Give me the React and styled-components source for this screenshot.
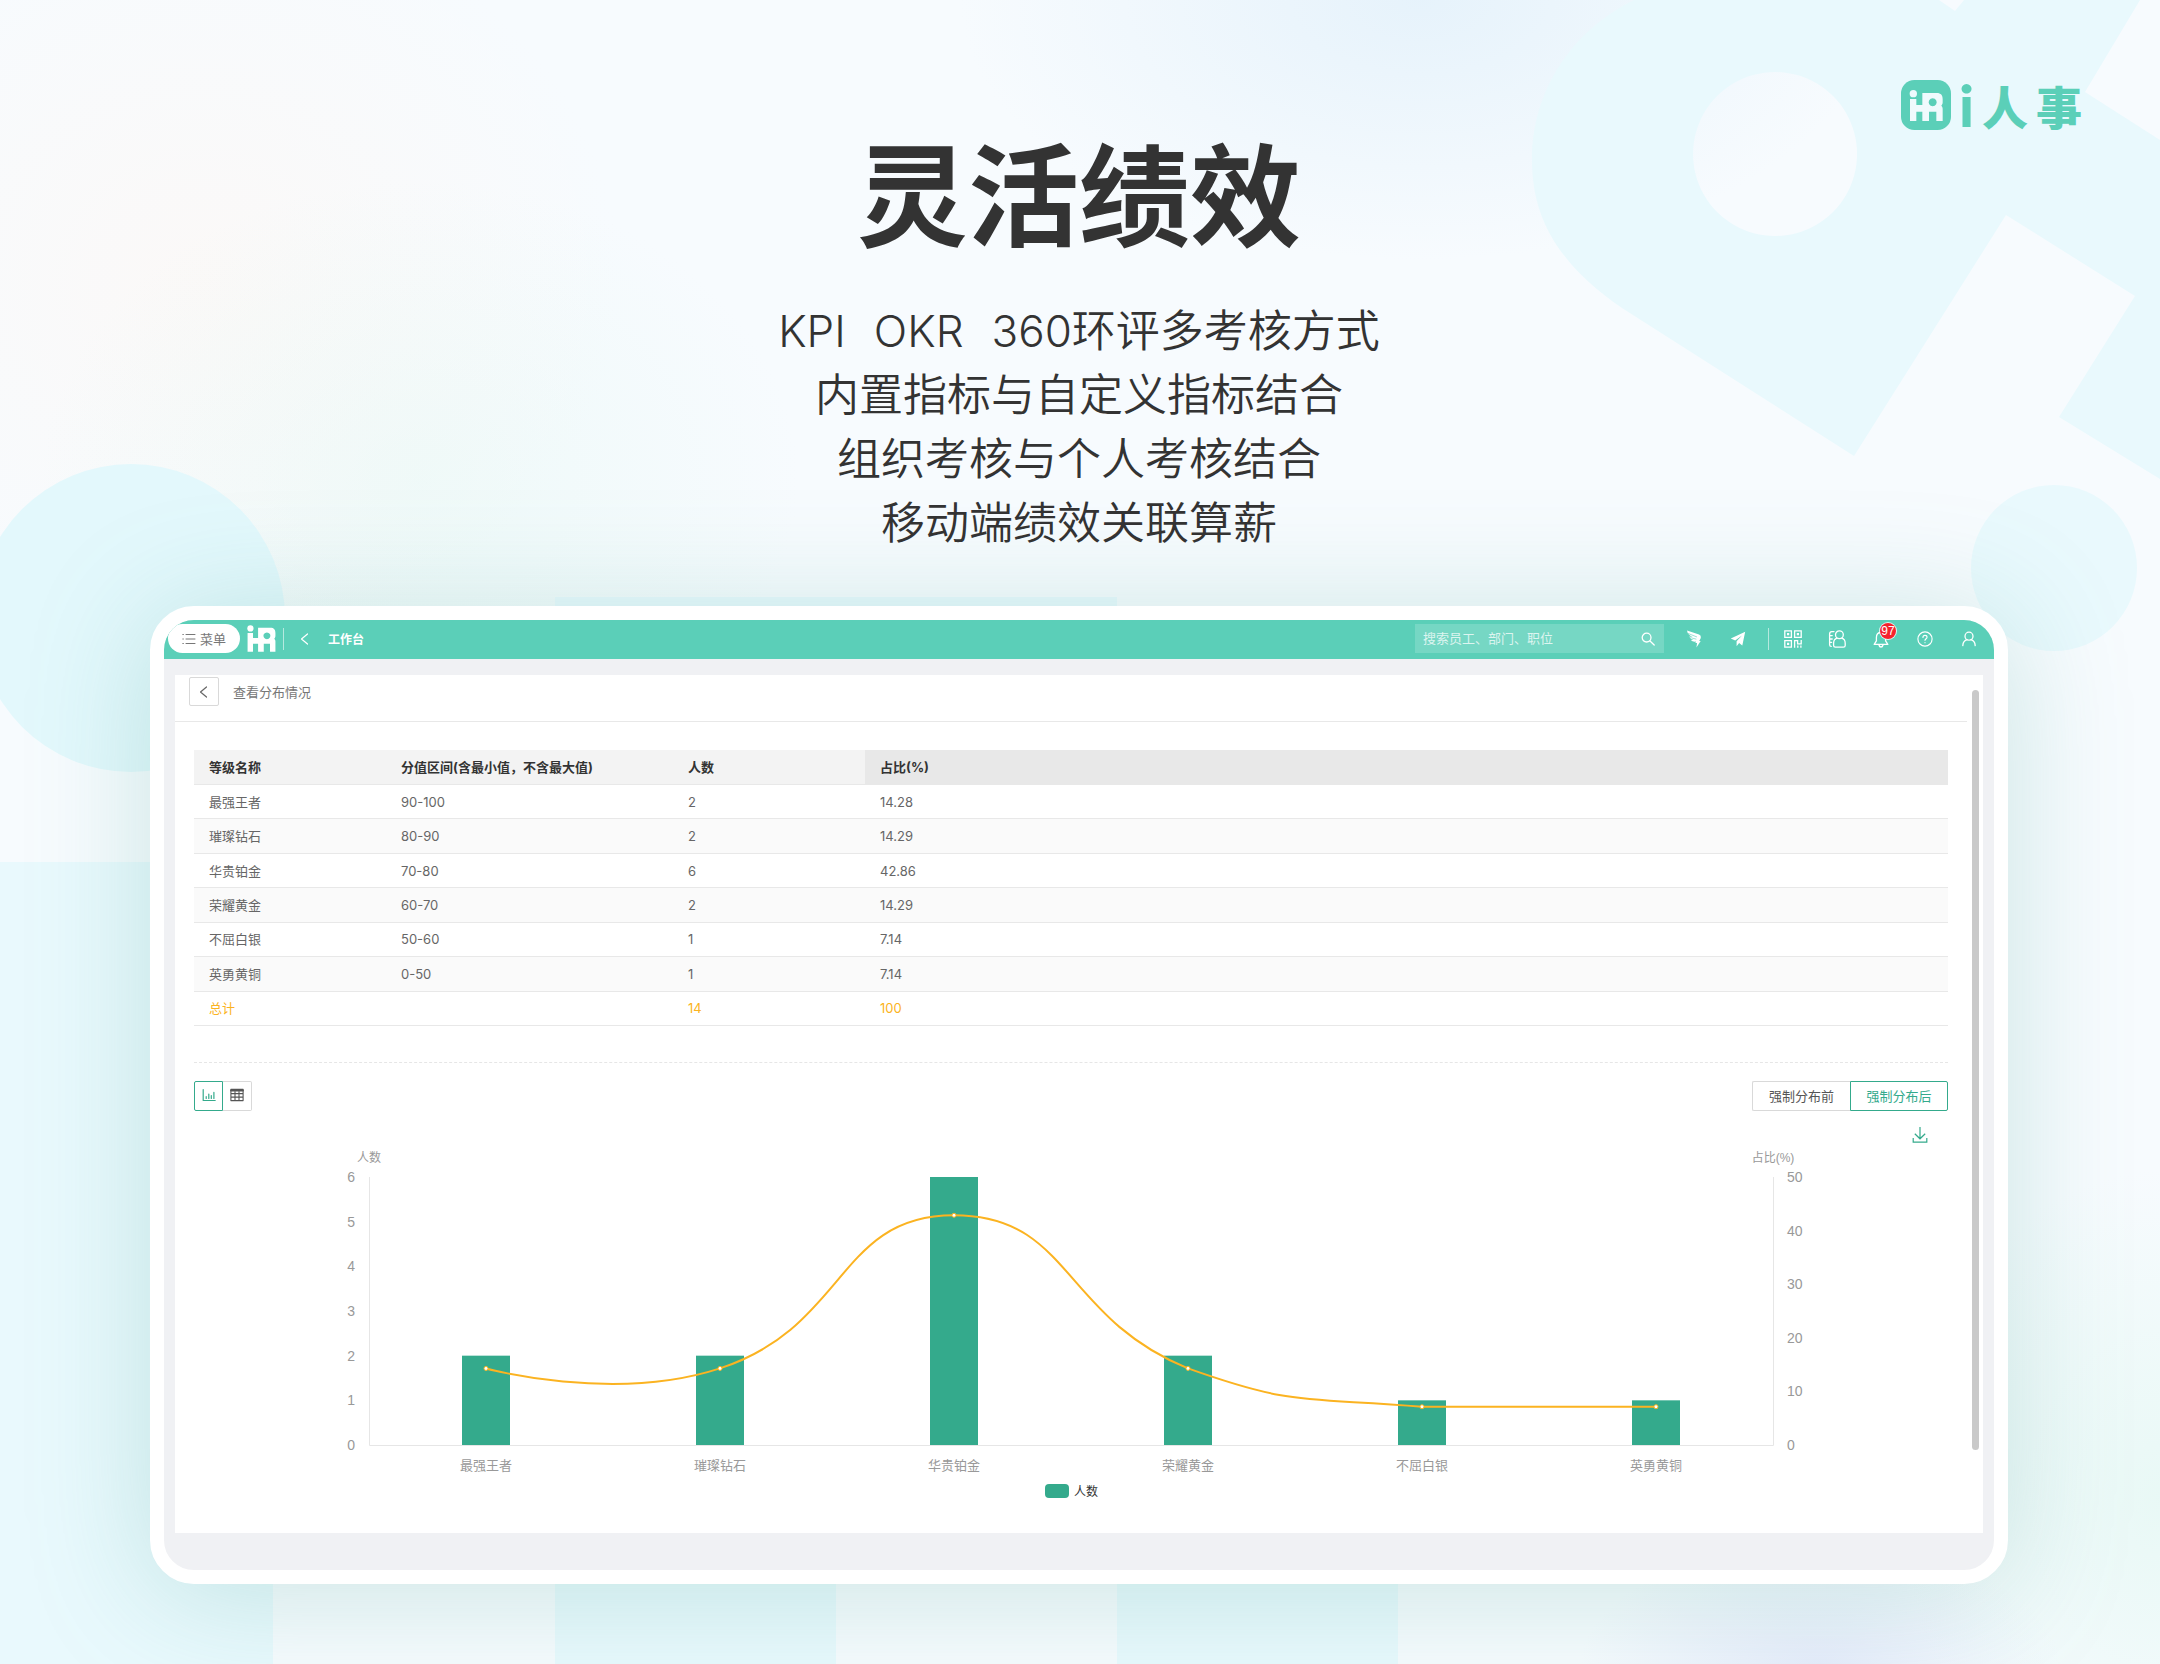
import React, { useState } from "react";
import styled, { createGlobalStyle, css } from "styled-components";

const brand = "#5bcfb8";
const green = "#34aa8c";
const amber = "#fbb321";

const GlobalStyle = createGlobalStyle`
  *, *::before, *::after { box-sizing: border-box; }
  body {
    margin: 0;
    background: #f8fbfe;
    color: #333;
    font-family: "Liberation Sans", "Noto Sans CJK SC", sans-serif;
    font-size: 13px;
  }
  button, input { font: inherit; }
`;

/* ---------- page ---------- */

const Page = styled.div`
  position: relative;
  isolation: isolate;
  min-height: 100vh;
  padding: 80px 152px 80px 150px;
  overflow: hidden;
`;

const Backdrop = styled.svg`
  position: absolute;
  inset: 0;
  z-index: -1;
  width: 100%;
  height: 100%;
`;

const Brand = styled.div`
  display: flex;
  justify-content: flex-end;
  align-items: center;
  gap: 8px;
  height: 50px;
  margin-right: -74px;
  color: ${brand};
  font-family: "Noto Sans CJK SC", sans-serif;
  font-size: 46px;
  font-weight: 900;
  line-height: 50px;
`;

const BrandInitial = styled.span`
  font-family: Lato, sans-serif;
  font-size: 58px;
`;

const Hero = styled.section`
  text-align: center;
  margin: 5px 0 51px;
`;

const HeroTitle = styled.h1`
  margin: 0 0 54px;
  font-family: "Noto Sans CJK SC", sans-serif;
  font-size: 111px;
  font-weight: 700;
  line-height: 110px;
`;

const HeroLine = styled.p`
  display: flex;
  justify-content: center;
  gap: 28px;
  margin: 0;
  font-family: Inter, "Noto Sans CJK SC", sans-serif;
  font-size: 44px;
  font-weight: 350;
  line-height: 64px;
`;

const Frame = styled.main`
  border: 14px solid #fff;
  border-radius: 44px;
  background: #f0f1f4;
  box-shadow: 0 10px 120px rgba(80, 170, 155, 0.27);
  overflow: hidden;
`;

/* ---------- top bar ---------- */

const TopBar = styled.header`
  display: flex;
  align-items: center;
  height: 39px;
  padding: 0 3px 2px 4px;
  background: ${brand};
  color: #fff;
`;

const MenuButton = styled.button`
  display: flex;
  align-items: center;
  gap: 4px;
  height: 29px;
  padding: 0 14px;
  border: 0;
  border-radius: 15px;
  background: #fff;
  color: #777;
`;

const Mark = styled.svg`
  width: 29px;
  height: 27px;
  margin: 0 7px;
`;

const Separator = styled.span`
  width: 1px;
  height: 22px;
  background: rgba(255, 255, 255, 0.55);
  margin-left: ${(p) => p.$before || 0}px;
  margin-right: ${(p) => p.$after || 0}px;
`;

const Crumb = styled.a`
  display: flex;
  align-items: center;
  gap: 17px;
  color: #fff;
  font-size: 12px;
  font-weight: 700;
  text-decoration: none;
`;

const Search = styled.label`
  display: flex;
  align-items: center;
  width: 249px;
  height: 29px;
  margin: 0 8px 0 auto;
  padding: 0 9px 0 8px;
  background: rgba(255, 255, 255, 0.17);
`;

const SearchInput = styled.input`
  flex: 1;
  min-width: 0;
  padding: 0;
  border: 0;
  outline: 0;
  background: transparent;
  color: #fff;
  &::placeholder { color: rgba(255, 255, 255, 0.75); opacity: 1; }
`;

const BarButton = styled.button`
  position: relative;
  display: flex;
  align-items: center;
  justify-content: center;
  width: 44px;
  height: 37px;
  padding: 0;
  border: 0;
  background: none;
  color: #fff;
`;

const Badge = styled.span`
  position: absolute;
  top: 3px;
  left: 21px;
  min-width: 16px;
  height: 16px;
  border-radius: 8px;
  box-shadow: 0 0 0 1px rgba(255, 255, 255, 0.8);
  background: #f5222d;
  font-size: 12px;
  line-height: 16px;
  text-align: center;
`;

/* ---------- panel ---------- */

const Workspace = styled.div`
  padding: 16px 11px 37px;
`;

const Panel = styled.section`
  position: relative;
  background: #fff;
`;

const PanelHead = styled.div`
  display: flex;
  align-items: flex-start;
  gap: 14px;
  height: 47px;
  margin-right: 16px;
  padding: 2px 0 0 14px;
  border-bottom: 1px solid #e8e8e8;
`;

const BackButton = styled.button`
  display: flex;
  align-items: center;
  justify-content: center;
  width: 30px;
  height: 29px;
  padding: 0;
  border: 1px solid #d9d9d9;
  border-radius: 2px;
  background: #fff;
  color: #666;
`;

const PanelTitle = styled.h2`
  margin: 0;
  color: #777;
  font-size: 13px;
  font-weight: 400;
  line-height: 32px;
`;

const PanelBody = styled.div`
  padding: 28px 35px 0 19px;
`;

const ScrollThumb = styled.div`
  position: absolute;
  top: 15px;
  right: 4px;
  bottom: 83px;
  width: 7px;
  border-radius: 4px;
  background: #c9c9c9;
`;

const Grid = styled.table`
  width: 100%;
  height: 276px;
  border-collapse: separate;
  border-spacing: 0;
  table-layout: fixed;
  font-family: Inter, "Noto Sans CJK SC", sans-serif;
  text-align: left;
`;

const Column = styled.col`
  width: ${(p) => (p.$width ? `${p.$width}px` : "auto")};
`;

const cell = css`
  padding: 0 15px;
  border-bottom: 1px solid #e8e8e8;
  line-height: 20px;
`;

const HeadCell = styled.th`
  ${cell}
  height: 35px;
  background: ${(p) => (p.$last ? "#e8e8e8" : "#f3f3f3")};
  color: #333;
  font-weight: 700;
`;

const Cell = styled.td`
  ${cell}
  color: inherit;
`;

const Row = styled.tr`
  color: ${(p) => (p.$total ? amber : "#666")};
  background: ${(p) => (p.$striped ? "#fafafa" : "#fff")};
`;

const Divider = styled.hr`
  margin: 36px 0 18px;
  border: 0;
  border-top: 1px dashed #e6e6e6;
`;

const Toolbar = styled.div`
  display: flex;
  justify-content: space-between;
`;

const Group = styled.div`
  display: flex;
`;

const Toggle = styled.button`
  display: flex;
  align-items: center;
  justify-content: center;
  width: ${(p) => (p.$wide ? 98 : 29)}px;
  height: 30px;
  padding: 0 0 2px;
  border: 1px solid #d9d9d9;
  background: #fff;
  color: #555;
  &:first-child { border-radius: 2px 0 0 2px; border-right-width: 0; }
  &:last-child { border-radius: 0 2px 2px 0; border-left-width: 0; }
  &[aria-pressed="true"] { border: 1px solid ${green}; color: ${green}; }
`;

const Download = styled.button`
  display: block;
  height: 16px;
  margin: 16px 20px 0 auto;
  padding: 0;
  border: 0;
  background: none;
  color: ${green};
`;

const Chart = styled.svg`
  display: block;
  width: 100%;
  height: 390px;
`;

const AxisText = styled.text`
  fill: ${(p) => (p.$dark ? "#333" : "#999")};
  font-size: ${(p) => p.$size}px;
  text-anchor: ${(p) => p.$anchor || "middle"};
`;

/* ---------- icons ---------- */

const Stroke = ({ size = 18, box = 18, width = 1.3, children }) => (
  <svg width={size} height={size} viewBox={`0 0 ${box} ${box}`} fill="none"
    stroke="currentColor" strokeWidth={width} strokeLinecap="round" strokeLinejoin="round" aria-hidden="true">
    {children}
  </svg>
);

const LeftIcon = () => (
  <Stroke size={12} box={12} width={1.2}><path d="M8.500 1 2.500 6l6 5" /></Stroke>
);
const ListIcon = () => (
  <Stroke size={14} box={14} width={1}>
    <path d="M4 2.500h9M4 7h9M4 11.500h9M.8 2.500h.6M.8 7h.6M.8 11.500h.6" />
  </Stroke>
);
const SearchIcon = () => (
  <Stroke size={14} box={14}><circle cx="5.6" cy="5.6" r="4.4" /><path d="m9 9 4.2 4" /></Stroke>
);
const WingIcon = () => (
  <svg width="16" height="18" viewBox="0 0 16 18" fill="currentColor" aria-hidden="true">
    <path d="M1 .6 13 4.600Q15.400 5.600 14.800 8L13.200 11h1.500l-4.300 6.400.7-4.300H9.400l.6-1.500Q6.600 12.200 4.800 10l2.800-.2Q4.200 8.800 3.200 6.400l3.400.6Q1.600 5 1 .6Z" />
    <path d="M2 3.400 11 7M4.400 7.600l6 1.600" stroke={brand} strokeWidth=".6" />
  </svg>
);
const PlaneIcon = () => (
  <svg width="16" height="16" viewBox="0 0 16 16" fill="currentColor" aria-hidden="true">
    <path d="M15.200.8.8 7.600l4.400 2L12 4.500 6.600 10.300v4.900l2.500-3.300 3.200 2.500Z" />
  </svg>
);
const QrIcon = () => (
  <svg width="18" height="18" viewBox="0 0 18 18" fill="none" stroke="currentColor" strokeWidth="1.300" aria-hidden="true">
    <path d="M.8.8h6.600v6.600H.8zM10.600.8h6.600v6.600h-6.600zM.8 10.600h6.600v6.600H.8z" />
    <path d="M3 4.100h2.200M12.800 4.100H15M3 13.900h2.200" strokeWidth="2.200" />
    <path d="M10.600 17.800v-7.200h3v3.200h3.600v-3.800M13.800 15.500v2.300M16.900 15.500v2.300" />
  </svg>
);
const ContactIcon = () => (
  <Stroke>
    <circle cx="11.400" cy="4.800" r="3.900" />
    <path d="M9 8.200c-2.400.8-3.400 2.600-3.400 5v2.200c0 1.100.6 1.800 1.800 1.800h8c1.200 0 1.800-.7 1.800-1.800v-2.200c0-2.400-1-4.200-3.400-5" />
    <path d="M6 1.600H3.800C2.400 1.600 1.600 2.400 1.600 4v10.800c0 1 .6 1.600 1.600 1.600M1.600 5.600h2.600M1.600 9h2.600M1.600 12.400h2" />
  </Stroke>
);
const BellIcon = () => (
  <Stroke>
    <path d="M9 2.500c-3 0-4.600 2.200-4.600 5v3.300L2.200 14.400h13.600l-2.200-3.600V7.500c0-2.800-1.600-5-4.600-5ZM7 15c.3 1.400 1 2 2 2s1.700-.6 2-2" />
  </Stroke>
);
const HelpIcon = () => (
  <Stroke size={16}>
    <circle cx="9" cy="9" r="8" />
    <path d="M6.700 7.300C6.700 5.800 7.600 5 9 5s2.300.8 2.300 2.100c0 1.500-2.300 1.600-2.300 3.400M9 13v.2" />
  </Stroke>
);
const UserIcon = () => (
  <Stroke size={16} box={16}>
    <circle cx="8" cy="5.200" r="4" />
    <path d="M1.800 14.600c.2-3.400 1.900-5.400 4.400-6M14.200 14.600c-.2-3.400-1.900-5.400-4.400-6" />
  </Stroke>
);
const BarsIcon = () => (
  <Stroke size={14} box={14} width={1.2}>
    <path d="M1.200 1.500v11h12M4.200 10.400V8.600M6.800 10.400V6M9.300 10.400V7.600M11.900 10.400V4.400" />
  </Stroke>
);
const TableIcon = () => (
  <Stroke size={14} box={14} width={1.1}>
    <path d="M.9 1.400h12.200v11.200H.9zM.9 5.600h12.200M.9 9.100h12.200M5 3.500v9M9 3.500v9" />
    <path d="M1.200 2.500h11.600" strokeWidth="2.200" />
  </Stroke>
);
const DownloadIcon = () => (
  <svg width="16" height="16" viewBox="0 0 16 16" fill="none" stroke="currentColor" strokeWidth="1.200" aria-hidden="true">
    <path d="M8 0v11.500M2.800 6.800 8 11.800l5.200-5M1.200 11v4.200h13.600V11" />
  </svg>
);

const HrShape = () => (
  <>
    <circle cx="11" cy="10" r="11" />
    <path d="M1 26h19v18h18V8h43c13 0 18 7 18 18v10c0 4-1 7-4 10 3 3 4 6 4 10v36H80V64H58v28H38V64H20v28H1Z M69 24a12 12 0 1 0 .1 0Z" fillRule="evenodd" />
  </>
);

const BrandIcon = () => (
  <svg width="50" height="50" viewBox="0 0 150 150" role="img" aria-label="iHR">
    <rect width="150" height="150" rx="40" fill={brand} />
    <g transform="translate(26 31)" fill="#f0fafd"><HrShape /></g>
  </svg>
);

/* ---------- data ---------- */

const levels = [
  { name: "最强王者", range: "90-100", count: 2, share: 14.28 },
  { name: "璀璨钻石", range: "80-90", count: 2, share: 14.29 },
  { name: "华贵铂金", range: "70-80", count: 6, share: 42.86 },
  { name: "荣耀黄金", range: "60-70", count: 2, share: 14.29 },
  { name: "不屈白银", range: "50-60", count: 1, share: 7.14 },
  { name: "英勇黄铜", range: "0-50", count: 1, share: 7.14 },
];

const plot = { left: 175, right: 1579, top: 34, bottom: 302 };
const plotHeight = plot.bottom - plot.top;
const band = (plot.right - plot.left) / levels.length;
const countY = (n) => plot.bottom - (n / 6) * plotHeight;
const shareY = (n) => plot.bottom - (n / 50) * plotHeight;
const points = levels.map((l, i) => [plot.left + band * (i + 0.5), shareY(l.share)]);

function smoothPath(pts) {
  const controls = pts.map(([x, y], i) => {
    const prev = pts[i - 1];
    const next = pts[i + 1];
    if (!prev || !next) return { before: [x, y], after: [x, y] };
    const before = Math.hypot(x - prev[0], y - prev[1]);
    const after = Math.hypot(next[0] - x, next[1] - y);
    const ratio = after / (before + after);
    const vx = (next[0] - prev[0]) / 2;
    const vy = (next[1] - prev[1]) / 2;
    const limit = (v) => Math.max(Math.min(v, Math.max(next[1], y)), Math.min(next[1], y));
    return {
      before: [x - vx * (1 - ratio), y - vy * (1 - ratio)],
      after: [x + vx * ratio, limit(y + vy * ratio)],
    };
  });
  return pts.reduce(
    (d, p, i) => (i ? `${d} C${controls[i - 1].after} ${controls[i].before} ${p}` : `M${p}`),
    ""
  );
}

function Distribution() {
  return (
    <Chart viewBox="0 0 1754 390" role="img" aria-label="人数与占比分布">
      <path d={`M${plot.left + 0.5} ${plot.top}V${plot.bottom + 0.5}H${plot.right + 0.5}V${plot.top}`} fill="none" stroke="#e6e6e6" />
      {levels.map((l, i) => (
        <rect key={l.name} x={points[i][0] - 24} y={countY(l.count)} width="48" height={plot.bottom - countY(l.count)} fill={green} />
      ))}
      <path d={smoothPath(points)} fill="none" stroke={amber} strokeWidth="2" />
      {points.map(([x, y]) => (
        <circle key={x} cx={x} cy={y} r="2" fill="#fff" stroke={amber} />
      ))}
      <AxisText $size={12} x={plot.left} y="19">人数</AxisText>
      <AxisText $size={12} x={plot.right} y="19">占比(%)</AxisText>
      {[0, 1, 2, 3, 4, 5, 6].map((n) => (
        <AxisText key={n} $size={14} $anchor="end" x={plot.left - 14} y={countY(n) + 5}>{n}</AxisText>
      ))}
      {[0, 10, 20, 30, 40, 50].map((n) => (
        <AxisText key={n} $size={14} $anchor="start" x={plot.right + 14} y={shareY(n) + 5}>{n}</AxisText>
      ))}
      {levels.map((l, i) => (
        <AxisText key={l.name} $size={13} x={points[i][0]} y="327">{l.name}</AxisText>
      ))}
      <rect x="851" y="341" width="24" height="14" rx="4" fill={green} />
      <AxisText $size={12} $dark $anchor="start" x="880" y="353">人数</AxisText>
    </Chart>
  );
}

function Background() {
  return (
    <Backdrop viewBox="0 0 2160 1664" preserveAspectRatio="xMidYMid slice" aria-hidden="true">
      <defs>
        {[["blue", "#dfeffa"], ["mint", "#dff7f0"], ["rose", "#fcf8f6"], ["lilac", "#e0e6fa"]].map(([id, c]) => (
          <radialGradient key={id} id={id}>
            <stop offset="0" stopColor={c} />
            <stop offset="1" stopColor={c} stopOpacity="0" />
          </radialGradient>
        ))}
      </defs>
      <rect width="2160" height="1664" fill="#f7fbfe" />
      <ellipse cx="200" cy="280" rx="420" ry="380" fill="url(#rose)" opacity="0.8" />
      <ellipse cx="420" cy="480" rx="380" ry="300" fill="url(#mint)" opacity="0.35" />
      <ellipse cx="1420" cy="0" rx="460" ry="260" fill="url(#blue)" opacity="0.7" />
      <ellipse cx="1820" cy="1664" rx="240" ry="120" fill="url(#lilac)" opacity="0.7" />
      <ellipse cx="2160" cy="1500" rx="260" ry="330" fill="url(#mint)" opacity="0.6" />
      <g fill="#e9f9fd">
        <circle cx="131" cy="618" r="154" fill="#e3f8fc" />
        <path d="M0 862h273v802H0zM555 597h562v1067h281V1200H836v464H555z" />
        <path fillRule="evenodd" d="M1634 0C1570 32 1532 92 1532 160c0 58 26 104 90 148l232 148 152-241 129 81-76 121 101 62V140l-75-48L2140 0H1964l-9 11-16-11ZM1775 72a82 82 0 1 0 .1 0Z" />
        <circle cx="2054" cy="568" r="83" />
      </g>
    </Backdrop>
  );
}

export default function App() {
  const [view, setView] = useState("chart");
  const [stage, setStage] = useState("after");
  return (
    <Page>
      <GlobalStyle />
      <Background />
      <Brand>
        <BrandIcon />
        <BrandInitial>i</BrandInitial>
        <span>人</span>
        <span>事</span>
      </Brand>
      <Hero>
        <HeroTitle>灵活绩效</HeroTitle>
        <HeroLine><span>KPI</span><span>OKR</span><span>360环评多考核方式</span></HeroLine>
        <HeroLine>内置指标与自定义指标结合</HeroLine>
        <HeroLine>组织考核与个人考核结合</HeroLine>
        <HeroLine>移动端绩效关联算薪</HeroLine>
      </Hero>

      <Frame>
        <TopBar>
          <MenuButton type="button"><ListIcon />菜单</MenuButton>
          <Mark viewBox="0 -2 100 95" fill="#fff" role="img" aria-label="iHR"><HrShape /></Mark>
          <Separator $after={15} />
          <Crumb href="#workbench"><LeftIcon />工作台</Crumb>
          <Search>
            <SearchInput type="search" placeholder="搜索员工、部门、职位" aria-label="搜索" />
            <SearchIcon />
          </Search>
          <BarButton type="button" aria-label="动态"><WingIcon /></BarButton>
          <BarButton type="button" aria-label="发送"><PlaneIcon /></BarButton>
          <Separator $before={8} $after={2} />
          <BarButton type="button" aria-label="二维码"><QrIcon /></BarButton>
          <BarButton type="button" aria-label="通讯录"><ContactIcon /></BarButton>
          <BarButton type="button" aria-label="通知"><BellIcon /><Badge>97</Badge></BarButton>
          <BarButton type="button" aria-label="帮助"><HelpIcon /></BarButton>
          <BarButton type="button" aria-label="我的"><UserIcon /></BarButton>
        </TopBar>

        <Workspace>
          <Panel>
            <PanelHead>
              <BackButton type="button" aria-label="返回"><LeftIcon /></BackButton>
              <PanelTitle>查看分布情况</PanelTitle>
            </PanelHead>
            <PanelBody>
              <Grid>
                <colgroup>
                  <Column $width={192} />
                  <Column $width={287} />
                  <Column $width={192} />
                  <Column />
                </colgroup>
                <thead>
                  <tr>
                    <HeadCell>等级名称</HeadCell>
                    <HeadCell>分值区间(含最小值，不含最大值)</HeadCell>
                    <HeadCell>人数</HeadCell>
                    <HeadCell $last>占比(%)</HeadCell>
                  </tr>
                </thead>
                <tbody>
                  {levels.map((l, i) => (
                    <Row key={l.name} $striped={i % 2 === 1}>
                      <Cell>{l.name}</Cell>
                      <Cell>{l.range}</Cell>
                      <Cell>{l.count}</Cell>
                      <Cell>{l.share}</Cell>
                    </Row>
                  ))}
                  <Row $total>
                    <Cell>总计</Cell>
                    <Cell />
                    <Cell>14</Cell>
                    <Cell>100</Cell>
                  </Row>
                </tbody>
              </Grid>
              <Divider />
              <Toolbar>
                <Group>
                  <Toggle type="button" aria-label="图表" aria-pressed={view === "chart"} onClick={() => setView("chart")}><BarsIcon /></Toggle>
                  <Toggle type="button" aria-label="表格" aria-pressed={view === "table"} onClick={() => setView("table")}><TableIcon /></Toggle>
                </Group>
                <Group>
                  <Toggle type="button" $wide aria-pressed={stage === "before"} onClick={() => setStage("before")}>强制分布前</Toggle>
                  <Toggle type="button" $wide aria-pressed={stage === "after"} onClick={() => setStage("after")}>强制分布后</Toggle>
                </Group>
              </Toolbar>
              <Download type="button" aria-label="下载"><DownloadIcon /></Download>
              <Distribution />
            </PanelBody>
            <ScrollThumb />
          </Panel>
        </Workspace>
      </Frame>
    </Page>
  );
}
